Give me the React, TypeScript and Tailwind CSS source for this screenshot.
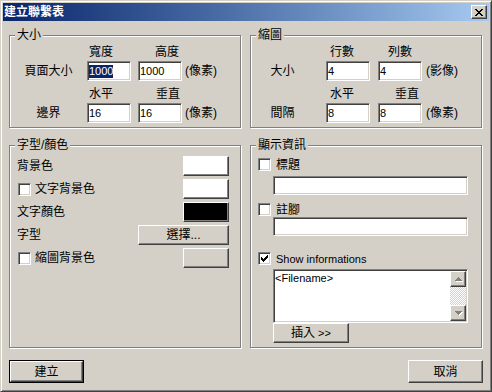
import type { ReactNode } from 'react';

const RAISED =
  'bg-[#d4d0c8] border border-t-white border-l-white border-r-[#404040] border-b-[#404040] shadow-[inset_-1px_-1px_0_#808080]';
const SUNKEN =
  'bg-white border border-t-[#808080] border-l-[#808080] border-r-white border-b-white shadow-[inset_1px_1px_0_#404040,inset_-1px_-1px_0_#d4d0c8]';

const CLOSE_X = ['XX....XX', '.XX..XX.', '..XXXX..', '...XX...', '..XXXX..', '.XX..XX.', 'XX....XX'];
const CHECK = ['......X', '.....XX', 'X...XXX', 'XX.XXX.', 'XXXXX..', '.XXX...', '..X....'];
const UP = ['...X...', '..XXX..', '.XXXXX.', 'XXXXXXX'];
const DOWN = ['XXXXXXX', '.XXXXX.', '..XXX..', '...X...'];

// tiny pixel-art glyphs (close cross, check mark, scroll arrows)
function Pixels({ rows, color = '#000' }: { rows: string[]; color?: string }) {
  const d = rows
    .flatMap((r, y) => [...r].map((c, x) => (c === 'X' ? `M${x} ${y}h1v1h-1z` : '')))
    .join('');
  return (
    <svg width={rows[0].length} height={rows.length} shapeRendering="crispEdges" className="block">
      <path d={d} fill={color} />
    </svg>
  );
}

function Group({ title, className, children }: { title: string; className?: string; children: ReactNode }) {
  return (
    <div className={`relative border border-[#808080] shadow-[inset_1px_1px_0_#fff,1px_1px_0_#fff] ${className ?? ''}`}>
      <span className="absolute left-[5px] top-[-7px] bg-[#d4d0c8] px-[2px] leading-[12px]">{title}</span>
      {children}
    </div>
  );
}

function Field({ value, selected, className }: { value: string; selected?: boolean; className?: string }) {
  return (
    <div className={`${SUNKEN} h-[20px] w-[44px] flex items-center pl-[1px] text-[11px] ${className ?? ''}`}>
      {selected ? (
        <span className="bg-[#0a246a] text-white leading-[13px]">{value}</span>
      ) : (
        <span className="leading-[13px]">{value}</span>
      )}
    </div>
  );
}

function Check({ checked }: { checked?: boolean }) {
  return (
    <div className={`${SUNKEN} w-[13px] h-[13px] flex items-center justify-center shrink-0`}>
      {checked && <Pixels rows={CHECK} />}
    </div>
  );
}

function ColorBtn({ color }: { color: string }) {
  return <div className={`${RAISED} ${color} w-[46px] h-[20px]`} />;
}

function Btn({ children, className }: { children: ReactNode; className?: string }) {
  return (
    <div className={`${RAISED} h-[20px] flex items-center justify-center leading-[12px] ${className ?? ''}`}>
      {children}
    </div>
  );
}

function ScrollArrow({ rows }: { rows: string[] }) {
  return (
    <div className={`${RAISED} w-[16px] h-[16px] flex items-center justify-center`}>
      <div className="relative">
        <div className="absolute left-[1px] top-[1px]">
          <Pixels rows={rows} color="#fff" />
        </div>
        <div className="relative">
          <Pixels rows={rows} color="#808080" />
        </div>
      </div>
    </div>
  );
}

export default function App() {
  return (
    <div className="w-[492px] h-[392px] bg-[#d4d0c8] border border-t-[#d4d0c8] border-l-[#d4d0c8] border-r-[#404040] border-b-[#404040] shadow-[inset_1px_1px_0_#fff,inset_-1px_-1px_0_#808080] p-[2px] text-[12px] leading-[12px] text-black font-['Liberation_Sans','Noto_Sans_CJK_TC',sans-serif]">
      {/* Title bar */}
      <div className="h-[18px] flex items-center justify-between bg-linear-to-r from-[#0a246a] to-[#a6caf0] pl-[1px] pr-[2px]">
        <span className="text-white font-bold leading-[12px]">建立聯繫表</span>
        <div className={`${RAISED} w-[16px] h-[14px] flex items-center justify-center`}>
          <Pixels rows={CLOSE_X} />
        </div>
      </div>

      <div className="px-[6px] pt-[14px]">
        {/* Size + thumbnail */}
        <div className="flex">
          <Group title="大小" className="w-[232px] h-[93px]">
            <div className="pt-[10px]">
              <div className="flex pl-[79px]">
                <span className="w-[66px]">寬度</span>
                <span>高度</span>
              </div>
              <div className="flex items-center mt-[3px]">
                <div className="w-[77px] text-center">頁面大小</div>
                <Field value="1000" selected />
                <Field value="1000" className="ml-[7px]" />
                <span className="ml-[3px]">(像素)</span>
              </div>
              <div className="flex pl-[79px] mt-[7px]">
                <span className="w-[67px]">水平</span>
                <span>垂直</span>
              </div>
              <div className="flex items-center mt-[3px]">
                <div className="w-[77px] text-center">邊界</div>
                <Field value="16" />
                <Field value="16" className="ml-[7px]" />
                <span className="ml-[3px]">(像素)</span>
              </div>
            </div>
          </Group>

          <Group title="縮圖" className="ml-[9px] w-[232px] h-[93px]">
            <div className="pt-[10px]">
              <div className="flex pl-[79px]">
                <span className="w-[58px]">行數</span>
                <span>列數</span>
              </div>
              <div className="flex items-center mt-[3px]">
                <div className="w-[63px] text-center">大小</div>
                <Field value="4" className="ml-[12px]" />
                <Field value="4" className="ml-[8px]" />
                <span className="ml-[4px]">(影像)</span>
              </div>
              <div className="flex pl-[79px] mt-[7px]">
                <span className="w-[65px]">水平</span>
                <span>垂直</span>
              </div>
              <div className="flex items-center mt-[3px]">
                <div className="w-[63px] text-center">間隔</div>
                <Field value="8" className="ml-[12px]" />
                <Field value="8" className="ml-[8px]" />
                <span className="ml-[4px]">(像素)</span>
              </div>
            </div>
          </Group>
        </div>

        {/* Font/colour + info */}
        <div className="flex mt-[17px]">
          <Group title="字型/顏色" className="w-[232px] h-[203px]">
            <div className="flex flex-col gap-[3px] pt-[10px] pl-[7px] pr-[11px]">
              <div className="flex items-center justify-between h-[20px]">
                <span>背景色</span>
                <ColorBtn color="bg-white" />
              </div>
              <div className="flex items-center justify-between h-[20px]">
                <div className="flex items-center ml-[1px]">
                  <Check />
                  <span className="ml-[4px]">文字背景色</span>
                </div>
                <ColorBtn color="bg-white" />
              </div>
              <div className="flex items-center justify-between h-[20px]">
                <span>文字顏色</span>
                <ColorBtn color="bg-black" />
              </div>
              <div className="flex items-center justify-between h-[20px]">
                <span>字型</span>
                <Btn className="w-[91px]">選擇...</Btn>
              </div>
              <div className="flex items-center justify-between h-[20px]">
                <div className="flex items-center ml-[1px]">
                  <Check />
                  <span className="ml-[4px]">縮圖背景色</span>
                </div>
                <ColorBtn color="bg-[#c6c3c6]" />
              </div>
            </div>
          </Group>

          <Group title="顯示資訊" className="ml-[9px] w-[232px] h-[203px]">
            <div className="flex flex-col pt-[12px] pl-[7px]">
              <div className="flex items-center h-[13px]">
                <Check />
                <span className="ml-[5px]">標題</span>
              </div>
              <div className={`${SUNKEN} ml-[15px] mt-[5px] w-[195px] h-[19px]`} />
              <div className="flex items-center h-[13px] mt-[8px]">
                <Check />
                <span className="ml-[5px]">註腳</span>
              </div>
              <div className={`${SUNKEN} ml-[15px] mt-[1px] w-[195px] h-[19px]`} />
              <div className="flex items-center h-[13px] mt-[16px]">
                <Check checked />
                <span className="ml-[5px] text-[11px]">Show informations</span>
              </div>
              <div className={`${SUNKEN} ml-[15px] mt-[4px] w-[195px] h-[54px] flex`}>
                <div className="flex-1 pl-[1px] pt-[2px] text-[11px] leading-[13px]">&lt;Filename&gt;</div>
                <div className="w-[16px] flex flex-col my-[1px] mr-[1px]">
                  <ScrollArrow rows={UP} />
                  <div className="flex-1 bg-[repeating-conic-gradient(#fff_0_25%,#d4d0c8_0_50%)] bg-[length:2px_2px]" />
                  <ScrollArrow rows={DOWN} />
                </div>
              </div>
              <Btn className="ml-[15px] w-[76px]">
                插入 <span className="ml-[3px] text-[11px]">&gt;&gt;</span>
              </Btn>
            </div>
          </Group>
        </div>

        {/* Bottom buttons */}
        <div className="flex justify-between mt-[12px]">
          <div className="border border-black w-[75px] h-[23px]">
            <Btn className="h-[21px]">建立</Btn>
          </div>
          <Btn className="w-[75px] h-[23px]">取消</Btn>
        </div>
      </div>
    </div>
  );
}
